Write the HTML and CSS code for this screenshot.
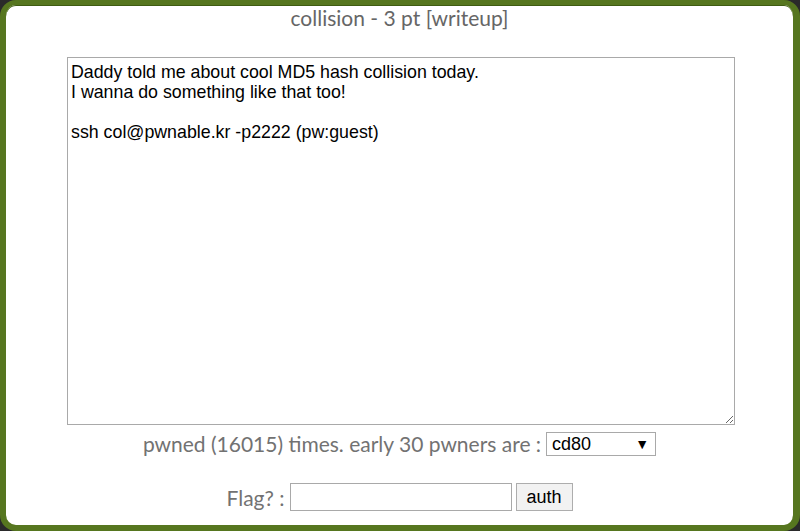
FILE: index.html
```html
<!DOCTYPE html>
<html>
<head>
<meta charset="utf-8">
<link rel="stylesheet" href="styles.css">
</head>
<body>
<div class="frame">
  <div class="title">collision - 3 pt [writeup]</div>
  <div class="desc-wrap">
    <textarea class="desc" readonly>Daddy told me about cool MD5 hash collision today.
I wanna do something like that too!

ssh col@pwnable.kr -p2222 (pw:guest)</textarea>
  </div>
  <div class="pwned">
    <span class="label">pwned (16015) times. early 30 pwners are :</span>
    <div class="select"><span>cd80</span><span class="arrow">▼</span></div>
  </div>
  <div class="flag">
    <span class="label">Flag? :</span>
    <input class="flag-input" type="text">
    <button class="auth">auth</button>
  </div>
</div>
</body>
</html>
```
FILE: styles.css
```css
html, body {
  margin: 0;
  padding: 0;
  background: #2a2a2a;
}
.frame {
  box-sizing: border-box;
  width: 800px;
  height: 531px;
  background: #fff;
  border-style: solid;
  border-color: #56761f;
  border-width: 5px 7px 6px 6px;
  border-radius: 16px;
  display: flex;
  flex-direction: column;
  align-items: center;
  font-family: Lato, "Liberation Sans", sans-serif;
  color: #6b6b6b;
  box-shadow: inset 0 1px 0 #3f5c12;
}
.title {
  font-size: 21px;
  line-height: 28px;
  margin-top: -1px;
  color: #666;
}
.desc-wrap {
  margin-top: 25px;
  display: flex;
}
.desc {
  box-sizing: border-box;
  width: 668px;
  height: 368px;
  margin: 0;
  margin-left: 3px;
  padding: 4px 3px 3px;
  border: 1px solid #a9a9a9;
  font-family: "Liberation Sans", Arial, sans-serif;
  font-size: 17.8px;
  line-height: 20px;
  color: #000;
  outline: none;
}
.pwned {
  display: flex;
  align-items: center;
  gap: 5px;
  margin-top: 7px;
  height: 24px;
}
.pwned .label {
  margin-bottom: 2px;
}
.label {
  font-size: 21px;
  color: #727272;
}
.select {
  box-sizing: border-box;
  width: 110px;
  height: 24px;
  border: 1px solid #a9a9a9;
  display: flex;
  align-items: center;
  justify-content: space-between;
  padding: 0 6px 0 5px;
  font-family: "Liberation Sans", Arial, sans-serif;
  font-size: 18px;
  color: #000;
}
.arrow {
  font-size: 14px;
}
.flag {
  display: flex;
  align-items: center;
  margin-top: 27px;
  height: 28px;
}
.flag .label {
  margin-right: 5px;
}
.flag-input {
  box-sizing: border-box;
  width: 222px;
  height: 28px;
  margin: 0;
  border: 1px solid #a9a9a9;
  padding: 2px 4px;
  font-family: "Liberation Sans", Arial, sans-serif;
  font-size: 18px;
}
.auth {
  box-sizing: border-box;
  width: 57px;
  height: 28px;
  margin: 0 0 0 4px;
  border: 1px solid #adadad;
  background: #f2f2f2;
  font-family: "Liberation Sans", Arial, sans-serif;
  font-size: 18px;
  color: #000;
  padding: 0;
}
```
